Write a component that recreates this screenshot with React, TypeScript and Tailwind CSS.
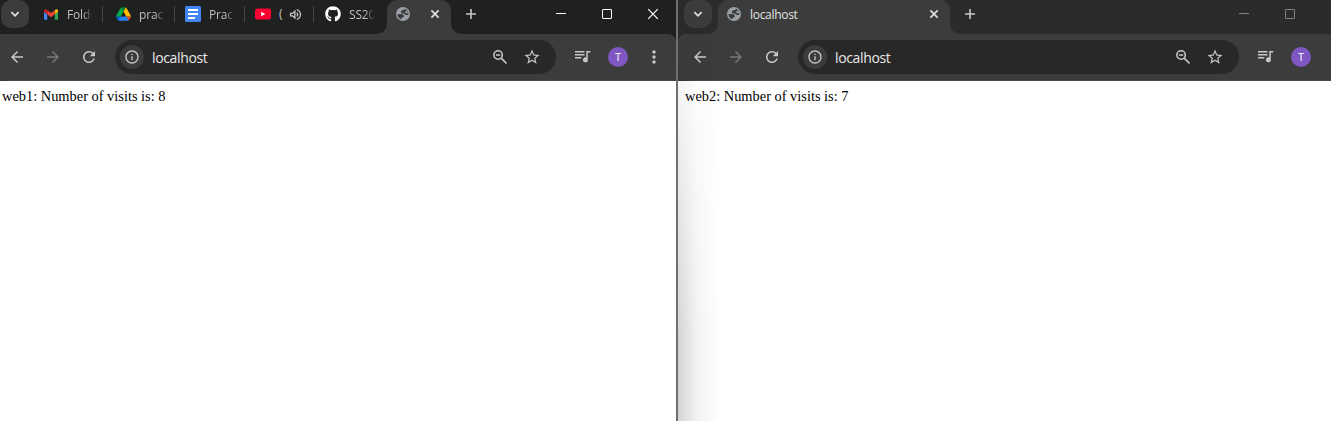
import React from 'react';
import {
  MdArrowBack,
  MdArrowForward,
  MdRefresh,
  MdInfoOutline,
  MdStarBorder,
  MdMoreVert,
  MdOutlineVolumeUp,
} from 'react-icons/md';
import { FaGithub } from 'react-icons/fa';

function ChevronButton() {
  return (
    <button className="flex h-7 w-7 shrink-0 items-center justify-center rounded-[10px] bg-[#3c3c3c]">
      <svg width="10" height="8" viewBox="0 0 10 8" fill="none" stroke="#e3e3e3" strokeWidth="1.7">
        <path d="M1.4 2.2 5 5.8 8.6 2.2" />
      </svg>
    </button>
  );
}

function GmailIcon() {
  return (
    <svg width="14" height="11" viewBox="52 42 88 66">
      <path fill="#4285f4" d="M58 108h14V74L52 59v43c0 3.32 2.69 6 6 6" />
      <path fill="#34a853" d="M120 108h14c3.32 0 6-2.69 6-6V59l-20 15" />
      <path fill="#fbbc04" d="M120 48v26l20-15v-8c0-7.42-8.47-11.65-14.4-7.2" />
      <path fill="#ea4335" d="M72 74V48l24 18 24-18v26L96 92" />
      <path fill="#c5221f" d="M52 51v8l20 15V48l-5.6-4.2c-5.94-4.45-14.4-.22-14.4 7.2" />
    </svg>
  );
}

function DriveIcon() {
  return (
    <svg width="15" height="14" viewBox="0 0 87.3 78">
      <path fill="#0066da" d="m6.6 66.85 3.85 6.65c.8 1.4 1.95 2.5 3.3 3.3l13.75-23.8h-27.5c0 1.55.4 3.1 1.2 4.5z" />
      <path fill="#00ac47" d="m43.65 25-13.75-23.8c-1.35.8-2.5 1.9-3.3 3.3l-25.4 44a9.06 9.06 0 0 0-1.2 4.5h27.5z" />
      <path fill="#ea4335" d="m73.55 76.8c1.35-.8 2.5-1.9 3.3-3.3l1.6-2.75 7.65-13.25c.8-1.4 1.2-2.95 1.2-4.5h-27.5l5.85 11.5z" />
      <path fill="#00832d" d="m43.65 25 13.75-23.8c-1.35-.8-2.9-1.2-4.5-1.2h-18.5c-1.6 0-3.15.45-4.5 1.2z" />
      <path fill="#2684fc" d="m59.8 53h-32.3l-13.75 23.8c1.35.8 2.9 1.2 4.5 1.2h50.8c1.6 0 3.15-.45 4.5-1.2z" />
      <path fill="#ffba00" d="m73.4 26.5-12.7-22c-.8-1.4-1.95-2.5-3.3-3.3l-13.75 23.8 16.15 28h27.45c0-1.55-.4-3.1-1.2-4.5z" />
    </svg>
  );
}

function DocsIcon() {
  return (
    <svg width="16" height="16" viewBox="0 0 16 16">
      <rect width="16" height="16" rx="1.5" fill="#4285f4" />
      <path d="M3 3h10v2H3zM3 7h10v2H3zM3 11h7v2H3z" fill="#fff" />
    </svg>
  );
}

function YoutubeIcon() {
  return (
    <svg width="16" height="12" viewBox="0 0 16 12">
      <rect y=".4" width="16" height="11.2" rx="2.6" fill="#ff0033" />
      <path d="M6.2 3.8 10.4 6 6.2 8.2z" fill="#fff" />
    </svg>
  );
}

function GlobeIcon() {
  return (
    <svg width="14" height="14" viewBox="0 0 14 14" className="shrink-0">
      <circle cx="7" cy="7" r="7" fill="#9aa0a6" />
      <path
        fill="#3c3c3c"
        d="M8.7 1.6 8.6 2.9H7.2C5.8 2.9 4.9 3.8 4.9 4.9 4.9 6 5.8 6.5 6.9 6.5H8.2C8.5 7.5 9 7.9 10 7.9H12.4C12.8 5.2 11.3 2.5 8.7 1.6z"
      />
      <path fill="#9aa0a6" d="M10.3 3.4C11.4 4 12.1 5 12.3 6.3H10.6C9.8 6.3 9.6 5.3 8.9 5V4.6C9.7 4.5 10.2 4.1 10.3 3.4z" />
      <path
        fill="#3c3c3c"
        d="M1.5 7H5.1C6.7 7 7.8 7.9 7.8 9.2V10.2H6.2V11.2H5.2V12.3C2.8 11.5 1.5 9.4 1.5 7z"
      />
    </svg>
  );
}

function CloseIcon() {
  return (
    <svg width="10" height="10" viewBox="0 0 10 10" stroke="#e0e0e0" strokeWidth="1.7" className="shrink-0">
      <path d="m1.4 1.4 7.2 7.2M8.6 1.4 1.4 8.6" />
    </svg>
  );
}

function PlusIcon() {
  return (
    <svg width="10" height="10" viewBox="0 0 10 10" stroke="#c7c7c7" strokeWidth="1.6" className="shrink-0">
      <path d="M5 0v10M0 5h10" />
    </svg>
  );
}

function ZoomOutIcon() {
  return (
    <svg width="14" height="14" viewBox="0 0 14 14" fill="none" stroke="#c7c7c7" strokeWidth="1.6">
      <circle cx="5.1" cy="5" r="4.2" />
      <path d="m8.2 8.1 5.3 5.3M3 5h4.2" />
    </svg>
  );
}

function MediaIcon() {
  return (
    <svg width="16" height="13" viewBox="0 0 16 13" fill="#c7c7c7" className="-mt-px ml-[19px] shrink-0">
      <path d="M0 1h9.5v1.5H0zM0 4h9.5v1.5H0zM0 7h6.3v1.5H0z" />
      <path d="M11.3 1H15.4V2.5H12.8V9.7A2.4 2.4 0 1 1 11.3 7.6z" />
    </svg>
  );
}

function WindowControls({ color, closable }: { color: string; closable: boolean }) {
  return (
    <div className="flex h-7 items-center">
      <svg width="46" height="28" fill="none" stroke={color}>
        <path d="M18 13.5h10" />
      </svg>
      <svg width="46" height="28" fill="none" stroke={color}>
        <rect x="18.5" y="9.5" width="9" height="9" rx=".5" />
      </svg>
      {closable && (
        <svg width="46" height="28" fill="none" stroke={color} strokeWidth="1.2">
          <path d="m18.2 9.2 9.6 9.6M27.8 9.2l-9.6 9.6" />
        </svg>
      )}
    </div>
  );
}

type SmallTabProps = { icon: React.ReactNode; label: string; audible?: boolean; last?: boolean };

function SmallTab({ icon, label, audible, last }: SmallTabProps) {
  return (
    <div className="flex h-7 w-[70px] shrink-0 items-center">
      <div className="flex w-4 shrink-0 justify-center">{icon}</div>
      <div
        className={
          audible
            ? 'ml-2 w-[6px] whitespace-nowrap text-[#c7c7c7]'
            : 'ml-2 w-[25px] bg-linear-to-r from-[#c7c7c7] from-65% to-[#c7c7c7]/5 bg-clip-text pt-px tracking-[-0.15px] whitespace-nowrap text-transparent'
        }
      >
        {label}
      </div>
      {audible && <MdOutlineVolumeUp size={15} color="#c7c7c7" className="ml-[3px] shrink-0" />}
      {!last && <div className="ml-[10px] h-4 w-px shrink-0 bg-[#474747]" />}
    </div>
  );
}

function ActiveTab({ label, wide, dim }: { label?: string; wide?: boolean; dim?: boolean }) {
  const curve = dim ? '#2b2b2b' : '#1f2020';
  return (
    <div className="flex h-[34px] shrink-0 items-end">
      <svg width="10" height="10" viewBox="0 0 10 10" className="bg-[#3c3c3c]">
        <path d="M0 0h10A10 10 0 0 1 0 10z" fill={curve} />
      </svg>
      <div
        className={
          wide
            ? 'flex h-[34px] w-[232px] items-start rounded-t-[10px] bg-[#3c3c3c] pr-[11px] pl-[9px]'
            : 'flex h-[34px] w-[64px] items-start rounded-t-[10px] bg-[#3c3c3c] pr-[11px] pl-[9px]'
        }
      >
        <div className="flex h-7 w-full items-center">
          <GlobeIcon />
          {label && <span className="ml-[9px] pt-px tracking-[-0.3px] text-[#e3e3e3]">{label}</span>}
          <div className="ml-auto">
            <CloseIcon />
          </div>
        </div>
      </div>
      <svg width="10" height="10" viewBox="0 0 10 10" className="bg-[#3c3c3c]">
        <path d="M10 0H0A10 10 0 0 0 10 10z" fill={curve} />
      </svg>
    </div>
  );
}

function Toolbar({ menu }: { menu?: boolean }) {
  return (
    <div className="flex h-[47px] items-center border-b border-[#484848] text-[#c7c7c7]">
      <div className="flex w-[107px] shrink-0 items-center justify-between pr-[17px]">
        <MdArrowBack size={18} />
        <MdArrowForward size={18} color="#757575" />
        <MdRefresh size={18} />
      </div>
      <div className="flex h-[34px] w-[441px] shrink-0 items-center rounded-full bg-[#282828] pr-[15px] pl-[5px]">
        <div className="flex h-6 w-6 items-center justify-center rounded-full bg-[#3c3c3c]">
          <MdInfoOutline size={16} />
        </div>
        <span className="ml-2 text-[14px] tracking-[-0.35px] text-[#e8e8e8]">localhost</span>
        <div className="ml-auto flex items-center gap-[16px]">
          <ZoomOutIcon />
          <MdStarBorder size={18} />
        </div>
      </div>
      <MediaIcon />
      <div className="ml-[17px] flex h-5 w-5 shrink-0 items-center justify-center rounded-full bg-[#7e57c2] text-[11px] font-medium text-white">
        T
      </div>
      {menu && <MdMoreVert size={20} className="ml-4 shrink-0" />}
    </div>
  );
}

export default function App() {
  return (
    <div className="flex h-[421px] w-[1331px] overflow-hidden bg-white font-['Open_Sans','Noto_Sans',sans-serif] text-[12px]">
      <section className="flex w-[676px] shrink-0 flex-col">
        <header className="flex h-[34px] items-start bg-[#1f2020] pl-px">
          <ChevronButton />
          <div className="ml-[14px] flex w-[334px] shrink-0">
            <div className="w-[72px] shrink-0">
              <SmallTab icon={<GmailIcon />} label="Folde" />
            </div>
            <SmallTab icon={<DriveIcon />} label="prac" />
            <SmallTab icon={<DocsIcon />} label="Prac" />
            <SmallTab icon={<YoutubeIcon />} label="(" audible />
            <SmallTab icon={<FaGithub size={16} color="#fff" />} label="SS20" last />
          </div>
          <ActiveTab />
          <div className="ml-[5px] flex h-7 items-center">
            <PlusIcon />
          </div>
          <div className="ml-auto">
            <WindowControls color="#ffffff" closable />
          </div>
        </header>
        <div className="bg-[#1f2020]">
          <div className="rounded-tr-lg bg-[#3c3c3c] pl-[8px]">
            <Toolbar menu />
          </div>
        </div>
        <main className="pt-[7px] pl-[2px] font-['Liberation_Serif',serif] text-[14.4px] leading-[17px] text-black">
          web1: Number of visits is: 8
        </main>
      </section>
      <div className="w-[2px] shrink-0 bg-[#707070]" />
      <section className="relative flex w-[653px] shrink-0 flex-col">
        <header className="flex h-[34px] items-start bg-[#2b2b2b] pl-[6px]">
          <ChevronButton />
          <div className="-ml-1">
            <ActiveTab wide dim label="localhost" />
          </div>
          <div className="ml-[5px] flex h-7 items-center">
            <PlusIcon />
          </div>
          <div className="ml-auto pr-[18px]">
            <WindowControls color="#818181" closable={false} />
          </div>
        </header>
        <div className="bg-[#2b2b2b]">
          <div className="rounded-tl-lg bg-[#3c3c3c] pl-[13px]">
            <Toolbar />
          </div>
        </div>
        <main className="pt-[7px] pl-[7px] font-['Liberation_Serif',serif] text-[14.4px] leading-[17px] text-black">
          web2: Number of visits is: 7
        </main>
        <div className="pointer-events-none absolute inset-y-0 left-0 w-[42px] bg-linear-to-r from-black/17 via-black/5 via-45% to-transparent mask-t-from-20% mask-t-to-100%" />
      </section>
    </div>
  );
}
